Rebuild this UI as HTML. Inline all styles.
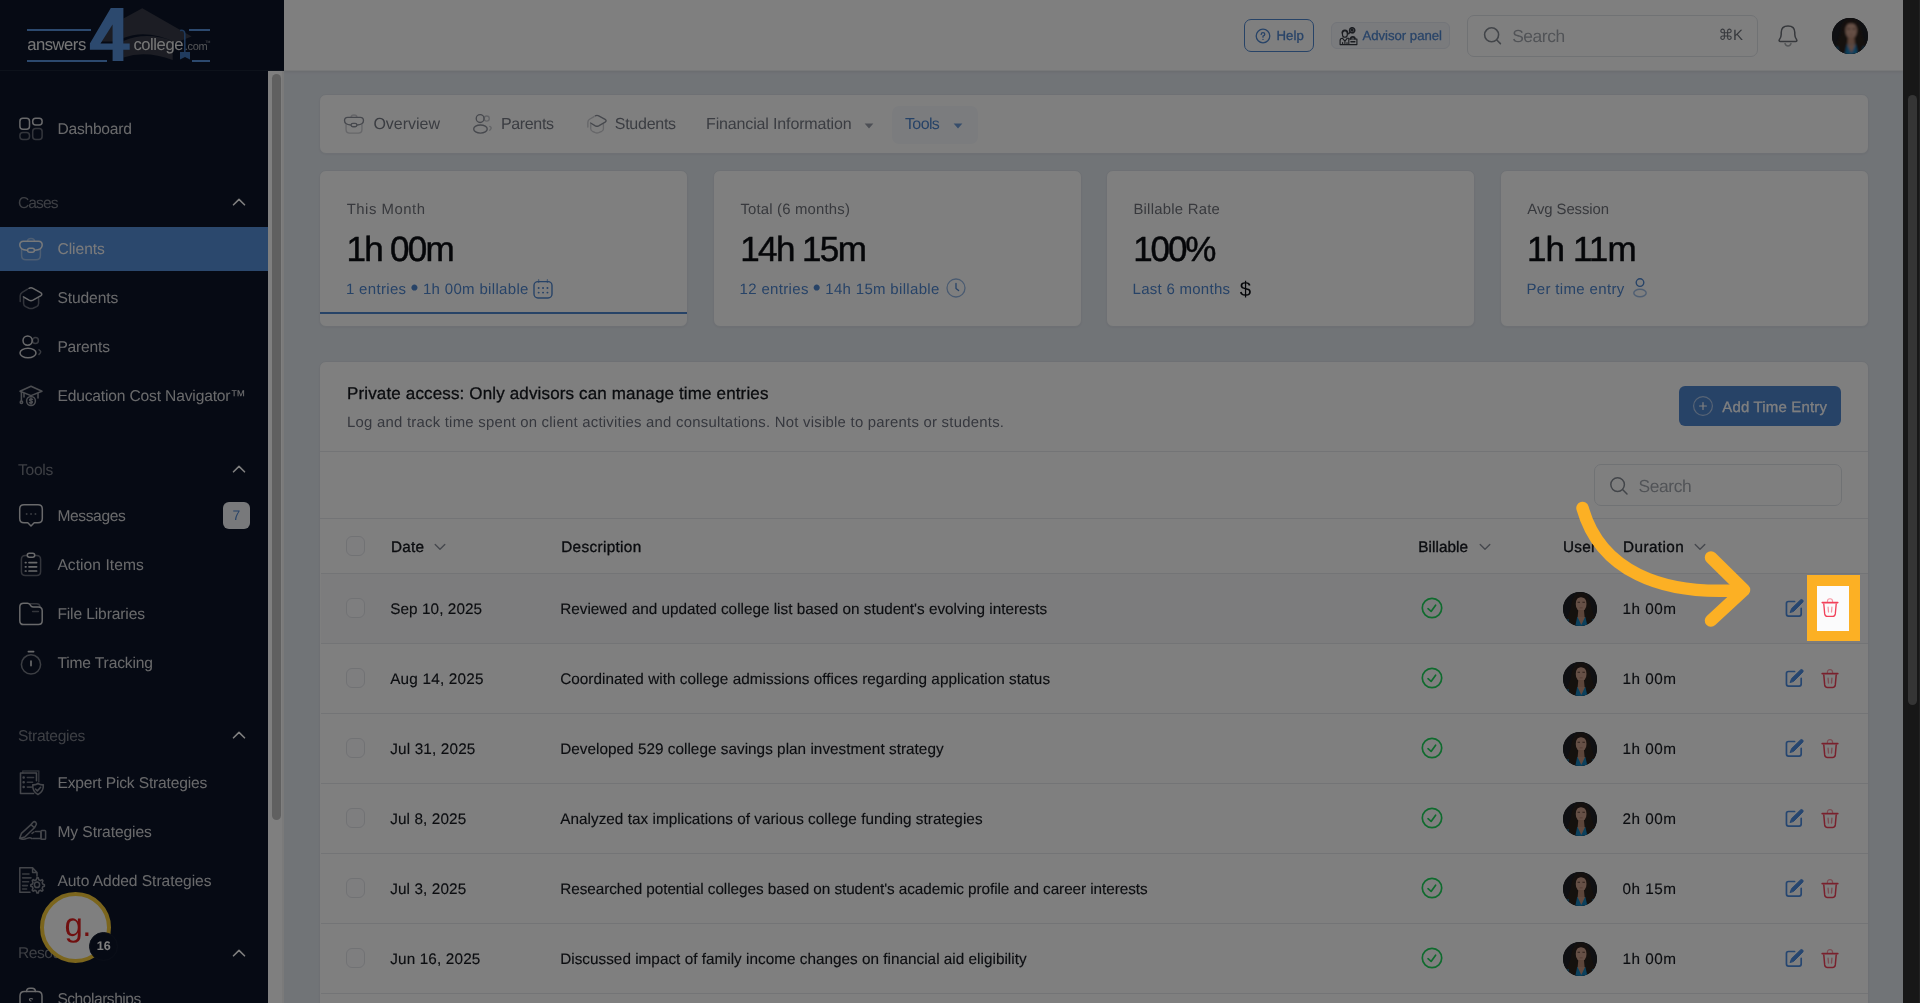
<!DOCTYPE html>
<html lang="en">
<head>
<meta charset="utf-8">
<title>Time Tracking</title>
<style>
*{box-sizing:border-box;margin:0;padding:0}
html,body{width:1920px;height:1003px;overflow:hidden;background:#e2e8f0}
body{font-family:"Liberation Sans",sans-serif;color:#111;position:relative;text-rendering:geometricPrecision}
.abs{position:absolute}
svg{display:block;overflow:visible}
#app{position:absolute;left:0;top:0;width:1920px;height:1003px;overflow:hidden;background:#e3e8ef;will-change:transform}
#logo{left:0;top:0;width:284px;height:71px;background:#0d1529;border-bottom:1px solid #1b2436}
#side{left:0;top:0;width:268px;height:1003px;background:#0d1529}
#sidescroll{left:268px;top:71px;width:16px;height:932px;background:#fefefe;border-right:2px solid #f4f4f4}
#sidescroll i{position:absolute;left:4px;top:3px;width:9px;height:746px;border-radius:5px;background:#c1c1c1}
.nav{position:absolute;left:0;width:268px;height:44px;color:#d2d3d6}
.nav svg{position:absolute;left:18px;top:9px}
.nav.on{background:#5690da;color:#f0f2f5}
.chev{position:absolute;left:232px}
#head{left:284px;top:0;width:1619px;height:71px;background:#fff;border-bottom:1px solid #eef0f3;box-shadow:0 1px 3px rgba(0,0,0,.08)}
.card{position:absolute;background:#fff;border:1px solid #dce1e8;border-radius:7px;box-shadow:0 1px 2px rgba(0,0,0,.04)}
.t{position:absolute;white-space:nowrap}
.row{position:absolute;left:0;width:1548px;height:70px;border-top:1px solid #e6e8ec}
.cb{position:absolute;left:24.7px;width:19.5px;height:19.5px;border:1px solid #e2e4e9;border-radius:6px;background:#fdfdfe}
.av{position:absolute;border-radius:50%;overflow:hidden;background:#16171b}
#dim{left:0;top:0;width:1903px;height:1003px;background:rgba(0,0,0,.5)}
#pscroll{left:1903px;top:0;width:17px;height:1003px;background:#171717;border-right:1px solid #222}
#pscroll i{position:absolute;left:5px;top:95px;width:9px;height:610px;border-radius:5px;background:#353535}
</style>
</head>
<body>
<svg width="0" height="0" style="position:absolute"><defs><filter id="avb" x="-10%" y="-10%" width="120%" height="120%"><feGaussianBlur stdDeviation=".8"/></filter></defs></svg>
<div id="app">
<div id="side" class="abs"><div class="nav" style="top:107px"><svg width="26" height="26" viewBox="0 0 26 26" stroke="currentColor" fill="none" stroke-linecap="round" stroke-linejoin="round" stroke-width="1.5"><rect x="1.9" y="2.2" width="9.6" height="11" rx="3"/><rect x="14.7" y="2.2" width="9.4" height="6.8" rx="3"/><g opacity=".45"><rect x="1.9" y="16.6" width="9.6" height="6.8" rx="3"/><rect x="14.7" y="12.4" width="9.4" height="11" rx="3"/></g></svg><div class="t" style="left:57.4px;top:12.6px;font-size:15.6px;line-height:20px;letter-spacing:-0.224px;color:#d2d3d6;">Dashboard</div></div><div class="t" style="left:18px;top:193.6px;font-size:15.6px;line-height:20px;letter-spacing:-0.944px;color:#7a7e88;">Cases</div><div class="chev" style="top:198px"><svg width="14" height="8" viewBox="0 0 14 8" stroke="#ffffff" fill="none" stroke-width="1.6" stroke-linecap="round" stroke-linejoin="round"><path d="M1.5 6.8 L7 1.4 L12.5 6.8"/></svg></div><div class="nav on" style="top:227px"><svg width="26" height="26" viewBox="0 0 26 26" stroke="currentColor" fill="none" stroke-linecap="round" stroke-linejoin="round" stroke-width="1.5"><path opacity=".45" d="M9.5 5.2 Q9.5 2.4 13 2.4 Q16.5 2.4 16.5 5.2"/><path d="M5.5 5.2 H20.5 Q24.2 5.2 24.2 9 Q24.2 13.8 17 14.2 M9 14.2 Q1.8 13.8 1.8 9 Q1.8 5.2 5.5 5.2"/><rect x="9.6" y="12.2" width="6.8" height="4" rx="2"/><path opacity=".45" d="M3.6 13.5 V19.5 Q3.6 23.8 8 23.8 H18 Q22.4 23.8 22.4 19.5 V13.5"/></svg><div class="t" style="left:57.4px;top:12.6px;font-size:15.6px;line-height:20px;letter-spacing:-0.026px;color:#f4f5f7;">Clients</div></div><div class="nav" style="top:276px"><svg width="26" height="26" viewBox="0 0 26 26" stroke="currentColor" fill="none" stroke-linecap="round" stroke-linejoin="round" stroke-width="1.5"><path d="M11 3.3 Q13 2.2 15 3.3 L22.6 7.6 Q25 9.2 22.6 10.8 L15 15.2 Q13 16.2 11 15.2 L5.4 11.8"/><path opacity=".45" d="M9.5 4.2 L4.2 7.4 Q2.2 8.8 2.2 11 V16.5"/><path opacity=".45" d="M5.6 13.5 V18.5 Q5.6 20.5 7.6 21.6 L11 23.2 Q13 24 15 23.2 L18.6 21.6 Q20.6 20.5 20.6 18.5 V13.5"/></svg><div class="t" style="left:57.4px;top:12.6px;font-size:15.6px;line-height:20px;letter-spacing:-0.097px;color:#d2d3d6;">Students</div></div><div class="nav" style="top:325px"><svg width="26" height="26" viewBox="0 0 26 26" stroke="currentColor" fill="none" stroke-linecap="round" stroke-linejoin="round" stroke-width="1.5"><circle cx="9.6" cy="6.6" r="4.6"/><ellipse cx="10" cy="19" rx="8" ry="4.8"/><g opacity=".5"><circle cx="17.4" cy="6.6" r="3"/><path d="M21 15.8 Q24.4 17.6 21 20.4"/></g></svg><div class="t" style="left:57.4px;top:12.6px;font-size:15.6px;line-height:20px;letter-spacing:-0.181px;color:#d2d3d6;">Parents</div></div><div class="nav" style="top:374px"><svg style="opacity:.7" width="26" height="26" viewBox="0 0 26 26" stroke="currentColor" fill="none" stroke-linecap="round" stroke-linejoin="round" stroke-width="1.5" stroke-width="1"><path d="M2 8.2 L13 3.2 L24 8.2 L13 12.6 Z"/><path d="M6 10.4 V14 M20 10.4 V15 M3.4 9 V17.6"/><circle cx="3.4" cy="19.2" r="1.2"/><circle cx="13" cy="18" r="4.4"/><path d="M14.5 16.4 Q13 15.4 11.8 16.4 Q11.2 17.6 13 18 Q14.8 18.5 14.2 19.6 Q13 20.6 11.5 19.6 M13 15 V21"/></svg><div class="t" style="left:57.4px;top:12.6px;font-size:15.6px;line-height:20px;letter-spacing:-0.160px;color:#d2d3d6;">Education Cost Navigator™</div></div><div class="t" style="left:18px;top:460.6px;font-size:15.6px;line-height:20px;letter-spacing:-0.284px;color:#7a7e88;">Tools</div><div class="chev" style="top:465px"><svg width="14" height="8" viewBox="0 0 14 8" stroke="#ffffff" fill="none" stroke-width="1.6" stroke-linecap="round" stroke-linejoin="round"><path d="M1.5 6.8 L7 1.4 L12.5 6.8"/></svg></div><div class="nav" style="top:494px"><svg width="26" height="26" viewBox="0 0 26 26" stroke="currentColor" fill="none" stroke-linecap="round" stroke-linejoin="round" stroke-width="1.5"><path d="M6 1.8 H20 Q24.3 1.8 24.3 6 V15.5 Q24.3 19.8 20 19.8 H16.2 L13 23 L9.8 19.8 H6 Q1.7 19.8 1.7 15.5 V6 Q1.7 1.8 6 1.8 Z"/><g opacity=".5" stroke-width="1.8"><path d="M8.6 11 h.1 M13 11 h.1 M17.4 11 h.1"/></g></svg><div class="t" style="left:57.4px;top:12.6px;font-size:15.6px;line-height:20px;letter-spacing:-0.388px;color:#d2d3d6;">Messages</div><b style="position:absolute;left:223px;top:8px;width:27px;height:27px;border-radius:6px;background:#f1f3f6;color:#4f86cf;font-weight:normal;font-size:14px;line-height:27px;text-align:center">7</b></div><div class="nav" style="top:543px"><svg width="26" height="26" viewBox="0 0 26 26" stroke="currentColor" fill="none" stroke-linecap="round" stroke-linejoin="round" stroke-width="1.5"><rect x="9.3" y="1.3" width="7.4" height="3.9" rx="1.9"/><path opacity=".45" d="M9 3.4 H7.4 Q3.4 3.4 3.4 7.4 V19.6 Q3.4 23.6 7.4 23.6 H18.6 Q22.6 23.6 22.6 19.6 V7.4 Q22.6 3.4 18.6 3.4 H17"/><g stroke-width="1.7"><path d="M7.4 10.6 h.6 M11 10.6 H18.6 M7.4 14.8 h.6 M11 14.8 H18.6 M7.4 19 h.6 M11 19 H18.6"/></g></svg><div class="t" style="left:57.4px;top:12.6px;font-size:15.6px;line-height:20px;letter-spacing:0.056px;color:#d2d3d6;">Action Items</div></div><div class="nav" style="top:592px"><svg width="26" height="26" viewBox="0 0 26 26" stroke="currentColor" fill="none" stroke-linecap="round" stroke-linejoin="round" stroke-width="1.5"><path d="M1.8 6 Q1.8 2.2 5.6 2.2 H9.4 Q11 2.2 12 3.6 L13 5 Q13.8 6 15.4 6 H20.4 Q24.2 6 24.2 9.8 V19.8 Q24.2 23.6 20.4 23.6 H5.6 Q1.8 23.6 1.8 19.8 Z"/><g opacity=".45"><path d="M12 2.8 H18.6 Q21.6 2.8 22 5.6 M14.6 10.6 H20.4"/></g></svg><div class="t" style="left:57.4px;top:12.6px;font-size:15.6px;line-height:20px;letter-spacing:-0.129px;color:#d2d3d6;">File Libraries</div></div><div class="nav" style="top:641px"><svg width="26" height="26" viewBox="0 0 26 26" stroke="currentColor" fill="none" stroke-linecap="round" stroke-linejoin="round" stroke-width="1.5"><circle cx="13" cy="14.4" r="9.6" opacity=".55"/><path d="M10.4 1.6 H15.6 M13 11 V15.6" stroke-width="1.7"/></svg><div class="t" style="left:57.4px;top:12.6px;font-size:15.6px;line-height:20px;letter-spacing:-0.145px;color:#d2d3d6;">Time Tracking</div></div><div class="t" style="left:18px;top:726.8px;font-size:15.6px;line-height:20px;letter-spacing:-0.324px;color:#7a7e88;">Strategies</div><div class="chev" style="top:731.2px"><svg width="14" height="8" viewBox="0 0 14 8" stroke="#ffffff" fill="none" stroke-width="1.6" stroke-linecap="round" stroke-linejoin="round"><path d="M1.5 6.8 L7 1.4 L12.5 6.8"/></svg></div><div class="nav" style="top:761px"><svg style="top:8px;opacity:.62" width="27" height="27.5" viewBox="0 0 26 26" stroke="currentColor" fill="none" stroke-linecap="round" stroke-linejoin="round" stroke-width="1.5" stroke-width="1"><path d="M15 23.4 H2.4 V3.6 H17.8 V11"/><path d="M4.6 3.6 V1.6 H20 V12" opacity=".6"/><path d="M5.4 8 h.1 M5.4 12.6 h.1 M5.4 17.2 h.1" stroke-width="2.4"/><path d="M9 8 H15 M9 12.6 H14 M9 17.2 H13" opacity=".8"/><path d="M19.2 13.6 Q21.6 15.4 24.4 15 Q24.8 21.4 19.2 24.4 Q13.8 21.4 14.2 15 Q17 15.4 19.2 13.6 Z"/><path d="M16.8 19 L18.6 20.8 L21.8 17.4"/></svg><div class="t" style="left:57.4px;top:12.6px;font-size:15.6px;line-height:20px;letter-spacing:-0.162px;color:#d2d3d6;">Expert Pick Strategies</div></div><div class="nav" style="top:810px"><svg style="opacity:.62" width="30" height="26" viewBox="0 0 30 26" stroke="currentColor" fill="none" stroke-linecap="round" stroke-linejoin="round" stroke-width="1.5" stroke-width="1"><path d="M1.6 19.4 L3.4 14.4 L13 5.6 L16.4 8.8 L6.8 18 Z M13 5.6 L15 3.2 Q16.4 2 17.8 3.4 Q19 4.8 17.8 6.4 L16.4 8.8 M1.6 19.4 Q5 21 9 19.4 Q12 18.2 14 19.6"/><path d="M17.6 12.4 H22 Q23 12.4 23 13.4 V19 M14 14.4 L16 13 M15 19.4 H23"/><rect x="23" y="11.4" width="4.6" height="8.8" rx=".8"/></svg><div class="t" style="left:57.4px;top:12.6px;font-size:15.6px;line-height:20px;letter-spacing:-0.067px;color:#d2d3d6;">My Strategies</div></div><div class="nav" style="top:859px"><svg style="top:7px;opacity:.62" width="28" height="28" viewBox="0 0 28 26" preserveAspectRatio="none" stroke="currentColor" fill="none" stroke-linecap="round" stroke-linejoin="round" stroke-width="1.5" stroke-width="1"><path d="M12 24.4 H1.8 V1.6 H14.6 L19 6 V9.4 M14.6 1.6 V6 H19"/><path d="M4.6 7.4 H11 M4.6 11 H13 M4.6 14.6 H10.6 M4.6 18.2 H9.4 M4.6 21.4 H8.6" opacity=".8"/><circle cx="19" cy="17.4" r="2.6"/><path d="M19 10.8 L20.3 11 L20.8 12.8 L22.4 13.6 L24 12.7 L25 13.7 L24.2 15.3 L24.8 16.8 L26.4 17.4 L26.4 18.8 L24.8 19.3 L24.2 20.8 L25 22.4 L24 23.4 L22.4 22.6 L20.8 23.2 L20.3 25 L18.9 25 L18.3 23.2 L16.8 22.6 L15.2 23.4 L14.2 22.4 L15 20.8 L14.4 19.3 L12.8 18.8 L12.8 17.4 L14.4 16.8 L15 15.3 L14.2 13.7 L15.2 12.7 L16.8 13.6 L18.3 12.8 Z"/></svg><div class="t" style="left:57.4px;top:12.6px;font-size:15.6px;line-height:20px;letter-spacing:-0.055px;color:#d2d3d6;">Auto Added Strategies</div></div><div class="t" style="left:18px;top:944.2px;font-size:15.6px;line-height:20px;letter-spacing:-0.507px;color:#7a7e88;">Resources</div><div class="chev" style="top:948.6px"><svg width="14" height="8" viewBox="0 0 14 8" stroke="#ffffff" fill="none" stroke-width="1.6" stroke-linecap="round" stroke-linejoin="round"><path d="M1.5 6.8 L7 1.4 L12.5 6.8"/></svg></div><div class="nav" style="top:977px"><svg width="26" height="26" viewBox="0 0 26 26" stroke="currentColor" fill="none" stroke-linecap="round" stroke-linejoin="round" stroke-width="1.5"><path d="M8.6 5.6 Q8.6 2.2 12 2.2 H14 Q17.4 2.2 17.4 5.6"/><path d="M2 10 Q2 5.6 6.4 5.6 H19.6 Q24 5.6 24 10 V24 H2 Z"/><path d="M14.6 13 Q13 12 11.6 13 Q11 14.4 13 15" stroke-width="1.1"/></svg><div class="t" style="left:57.4px;top:12.6px;font-size:15.6px;line-height:20px;letter-spacing:-0.485px;color:#d2d3d6;">Scholarships</div></div>
<div class="abs" style="left:40px;top:892px;width:71px;height:71px;border-radius:50%;background:#ffffff;border:4.5px solid #f6cb3a"></div>
<div class="abs" style="left:64.6px;top:905.2px;font-size:33px;line-height:40px;color:#e01f1f;letter-spacing:-.6px;white-space:nowrap">g.</div>
<div class="abs" style="left:89.3px;top:931.8px;width:29px;height:29px;border-radius:50%;background:#0d1529;border:1px solid #151d30;color:#fff;font-weight:bold;font-size:12.5px;line-height:27px;text-align:center">16</div>
</div>
<div id="logo" class="abs">
<svg width="284" height="70" viewBox="0 0 284 70">
 <path d="M123.4 18.5 L142.3 8.2 L191.6 36.4 L176 42.5 Q146 28.5 123.4 38 Z" fill="#383b48"/>
 <path d="M123.4 41 Q146 31 172.7 41 L172.7 60 Q146 50 123.4 57.5 Z" fill="#383b48"/>
 <path d="M113 23.5 L113 41.5 L101 41.5 Z" fill="#383b48"/>
 <path fill-rule="evenodd" fill="#5892dc" d="M110.8 8 H123.4 V43.5 H129.7 V49.8 H123.4 V61 H112.6 V49.8 H89.9 V43.5 Z M112.6 24.5 L100.5 43.5 H112.6 Z"/>
 <path d="M180 30.5 Q184.8 29.5 184.8 34 V52" stroke="#3e72b6" stroke-width="1.6" fill="none"/>
 <path d="M180 52 H190 V59.6 L185 57 L180 59.6 Z" fill="#4077bd"/>
 <rect x="27" y="29" width="64" height="2" fill="#5892dc"/>
 <rect x="27" y="60" width="80" height="2" fill="#5892dc"/>
 <rect x="189" y="29" width="21" height="2" fill="#5892dc"/>
 <rect x="192" y="60" width="18" height="2" fill="#5892dc"/>
 <text x="27.3" y="49.6" font-size="16.6" fill="#ededed" letter-spacing="-0.48" font-family="Liberation Sans, sans-serif">answers</text>
 <text x="133.4" y="49.6" font-size="16.6" fill="#ededed" letter-spacing="-0.42" font-family="Liberation Sans, sans-serif">college</text>
 <text x="184.8" y="49.6" font-size="11" fill="#a9abb0" letter-spacing="-0.3" font-family="Liberation Sans, sans-serif">.com</text>
 <text x="205.5" y="42.5" font-size="3.4" fill="#a9abb0" font-family="Liberation Sans, sans-serif">TM</text>
</svg></div>
<div id="sidescroll" class="abs"><i></i></div>
<div id="head" class="abs">
 <div class="abs" style="left:960px;top:19px;width:70px;height:33px;border:1.3px solid #4f86cf;border-radius:7px"></div>
 <svg class="abs" style="left:971px;top:28px" width="16" height="16" viewBox="0 0 16 16" fill="none" stroke-linecap="round" stroke-linejoin="round" stroke="#4f86cf" stroke-width="1.3"><circle cx="8" cy="8" r="6.8"/><path d="M6.2 6.4 Q6.2 4.6 8 4.6 Q9.8 4.6 9.8 6.2 Q9.8 7.4 8 8.2 V9.2 M8 11.3 v.1"/></svg>
 <div class="t" style="left:992.5px;top:26px;font-size:13.2px;line-height:20px;letter-spacing:0.038px;color:#4f86cf;-webkit-text-stroke:0.3px #4f86cf;">Help</div>
 <div class="abs" style="left:1047px;top:22px;width:119px;height:27px;border:1px solid #e6eaf2;background:#f4f6fb;border-radius:6px"></div>
 <svg class="abs" style="left:1055px;top:26px" width="19" height="20" viewBox="0 0 19 20" fill="none" stroke-linecap="round" stroke-linejoin="round" stroke="#1d2129" stroke-width="1.15" opacity=".88"><ellipse cx="5.9" cy="8" rx="2.5" ry="3.3"/><path d="M3.2 7 Q3 4.2 5.9 4.2 Q8.8 4.2 8.6 7" stroke-width="1.5"/><path d="M1.1 18.6 V14.4 Q1.1 12.4 3.4 12.2 L5.9 15.2 L8.4 12.2 H9.8 M1.1 18.6 H17.9 V13 H9.8 V18.6 M3.6 18.4 V16.6 M8 18.4 V16.6 M5.9 15.2 V17.6" /><path d="M11.6 13 Q11.6 10.9 13.8 10.9 Q16 10.9 16 13" stroke-width="1.6"/><path d="M12 15.8 H15.8" stroke-width="1.5"/><circle cx="13.2" cy="4.3" r="2.5" stroke-width="1.7" stroke-dasharray="1.3 .9"/><circle cx="13.2" cy="4.3" r=".9" fill="#1d2129"/><path d="M10.8 6.6 L9.6 7.8" stroke-width="1.4"/></svg>
 <div class="t" style="left:1078.4px;top:26px;font-size:13.2px;line-height:20px;letter-spacing:-0.022px;color:#4f86cf;-webkit-text-stroke:0.25px #4f86cf;">Advisor panel</div>
 <div class="abs" style="left:1183px;top:15px;width:291px;height:41.5px;border:1px solid #e1e4e9;border-radius:7px;background:#fff"></div>
 <svg class="abs" style="left:1199px;top:26px" width="21" height="21" viewBox="0 0 21 21" fill="none" stroke-linecap="round" stroke-linejoin="round" stroke="#858a93" stroke-width="1.6"><circle cx="8.6" cy="8.8" r="7"/><path d="M13.8 14 L17.4 17.6"/></svg>
 <div class="t" style="left:1228.2px;top:26.1px;font-size:17.4px;line-height:20px;letter-spacing:-0.439px;color:#a3a7ae;">Search</div>
 <div class="t" style="left:1434.5px;top:26px;font-size:15px;line-height:20px;color:#70747c;letter-spacing:-.6px;">&#8984;K</div>
 <svg class="abs" style="left:1492.5px;top:24px" width="22" height="24" viewBox="0 0 22 24" fill="none" stroke-linecap="round" stroke-linejoin="round" stroke="#6d7178" stroke-width="1.5"><path d="M3.4 17.4 Q1.4 17.4 2.4 15.6 Q4.2 13 4.2 10.4 V8.6 Q4.2 2 11 2 Q17.8 2 17.8 8.6 V10.4 Q17.8 13 19.6 15.6 Q20.6 17.4 18.6 17.4 Z"/><path d="M8 19.6 Q8.8 22 11 22 Q13.2 22 14 19.6" opacity=".6"/></svg>
 <div class="av" style="left:1548px;top:18px;width:36px;height:36px"><svg width="36" height="36" viewBox="0 0 36 36"><rect width="36" height="36" fill="#1e2026"/><g filter="url(#avb)">
<path d="M19 0.8 Q10.5 1.2 9.4 11 Q8.6 18 5.6 24 Q2.6 30 4.4 38 H33.6 Q35.4 30 32.6 24 Q29.8 18 28.8 11 Q27.6 1.2 19 0.8 Z" fill="#2c201b"/>
<path d="M1.5 30.5 L6 28.4 L7 37 H2 Z M34.5 30 L31 28.2 L30 37 H34 Z" fill="#0f6894"/>
<ellipse cx="19.2" cy="12.6" rx="5.7" ry="8" fill="#cda08c"/>
<path d="M16.2 19 H22.2 L23 27.5 H15.4 Z" fill="#b98a74"/>
<path d="M12.8 37 L15 26.4 H23.8 L26 37 Z" fill="#1482bc"/>
<path d="M15.4 26.4 H23.4 L19.4 35 Z" fill="#c2927c"/>
<path d="M15.4 10.8 h2.6 M20.6 10.8 h2.6" stroke="#5e4238" stroke-width="1.2" fill="none"/>
<path d="M17.6 16.8 h3.2" stroke="#a8766a" stroke-width=".9" fill="none"/>
<path d="M13.2 8.4 Q14.6 3.6 19 3.4 Q23.8 3.6 25.2 8.6 Q22 5.4 19 5.6 Q16 5.4 13.2 8.4 Z" fill="#2c201b"/>
</g></svg></div>
</div>
<div class="card" style="left:319px;top:94px;width:1550px;height:60px"><div class="abs" style="left:1px;top:1px;width:1548px;height:58px">
 <svg class="abs" style="left:22px;top:17px" width="22" height="22" viewBox="0 0 26 26" fill="none" stroke-linecap="round" stroke-linejoin="round" stroke="#8d919b" stroke-width="1.6"><path opacity=".45" d="M9.5 5.2 Q9.5 2.4 13 2.4 Q16.5 2.4 16.5 5.2"/><path d="M5.5 5.2 H20.5 Q24.2 5.2 24.2 9 Q24.2 13.8 17 14.2 M9 14.2 Q1.8 13.8 1.8 9 Q1.8 5.2 5.5 5.2"/><rect x="9.6" y="12.2" width="6.8" height="4" rx="2"/><path opacity=".45" d="M3.6 13.5 V19.5 Q3.6 23.8 8 23.8 H18 Q22.4 23.8 22.4 19.5 V13.5"/></svg><div class="t" style="left:52.4px;top:19px;font-size:16px;line-height:20px;letter-spacing:-0.010px;color:#767a84;">Overview</div>
 <svg class="abs" style="left:151px;top:17px" width="22" height="22" viewBox="0 0 26 26" fill="none" stroke-linecap="round" stroke-linejoin="round" stroke="#8d919b" stroke-width="1.6"><circle cx="9.6" cy="6.6" r="4.6"/><ellipse cx="10" cy="19" rx="8" ry="4.8"/><g opacity=".5"><circle cx="17.4" cy="6.6" r="3"/><path d="M21 15.8 Q24.4 17.6 21 20.4"/></g></svg><div class="t" style="left:180px;top:19px;font-size:16px;line-height:20px;letter-spacing:-0.363px;color:#767a84;">Parents</div>
 <svg class="abs" style="left:265px;top:17px" width="22" height="22" viewBox="0 0 26 26" fill="none" stroke-linecap="round" stroke-linejoin="round" stroke="#8d919b" stroke-width="1.6"><path d="M11 3.3 Q13 2.2 15 3.3 L22.6 7.6 Q25 9.2 22.6 10.8 L15 15.2 Q13 16.2 11 15.2 L5.4 11.8"/><path opacity=".45" d="M9.5 4.2 L4.2 7.4 Q2.2 8.8 2.2 11 V16.5"/><path opacity=".45" d="M5.6 13.5 V18.5 Q5.6 20.5 7.6 21.6 L11 23.2 Q13 24 15 23.2 L18.6 21.6 Q20.6 20.5 20.6 18.5 V13.5"/></svg><div class="t" style="left:293.8px;top:19px;font-size:16px;line-height:20px;letter-spacing:-0.270px;color:#767a84;">Students</div>
 <div class="t" style="left:385px;top:19px;font-size:16px;line-height:20px;letter-spacing:-0.144px;color:#767a84;">Financial Information</div><svg class="abs" style="left:543px;top:27px" width="10" height="6" viewBox="0 0 10 6"><path d="M.6 .6 H9.4 L5 5.4 Z" fill="#9a9fab"/></svg>
 <div class="abs" style="left:571px;top:9.5px;width:86px;height:38.5px;border-radius:7px;background:#f7f9fc"></div>
 <div class="t" style="left:584px;top:19px;font-size:16px;line-height:20px;letter-spacing:-0.630px;color:#4f86cf;">Tools</div><svg class="abs" style="left:632px;top:27px" width="10" height="6" viewBox="0 0 10 6"><path d="M.6 .6 H9.4 L5 5.4 Z" fill="#6f9bd6"/></svg>
</div></div>
<div class="card" style="left:319px;top:170px;width:369px;height:157px;overflow:hidden"><div class="abs" style="left:1px;top:0;width:366px;height:155px">
 <div class="t" style="left:25.7px;top:29.2px;font-size:14.9px;line-height:20px;letter-spacing:0.510px;color:#70737b;">This Month</div>
 <div class="t" style="left:25.5px;top:59px;font-size:35px;line-height:40px;letter-spacing:-1.724px;color:#0b0d12;-webkit-text-stroke:0.5px #0b0d12;">1h 00m</div>
 <div class="t" style="left:24.9px;top:108.5px;font-size:15px;line-height:20px;letter-spacing:0.331px;color:#4f86cf;">1 entries <span style="display:inline-block;width:.5em;white-space:nowrap;letter-spacing:0"><span style="font-size:1.5em;line-height:0;position:relative;left:-.02em;top:.07em">•</span></span> 1h 00m billable</div>
 <svg class="abs" style="left:212px;top:107.5px" width="20" height="20" viewBox="0 0 20 20" fill="none" stroke-linecap="round" stroke-linejoin="round" stroke="#4f86cf" stroke-width="1.4"><rect x="1" y="2.6" width="18" height="16.4" rx="4"/><path d="M5.6 .8 V3.4 M14.4 .8 V3.4" opacity=".6"/><path d="M5.6 9 h.1 M10 9 h.1 M14.4 9 h.1 M5.6 13.6 h.1 M10 13.6 h.1 M14.4 13.6 h.1" stroke-width="1.9"/></svg><div class="abs" style="left:-2px;top:140.5px;width:372px;height:2px;background:#4f86cf"></div>
</div></div><div class="card" style="left:713px;top:170px;width:369px;height:157px;overflow:hidden"><div class="abs" style="left:0.7px;top:0;width:366px;height:155px">
 <div class="t" style="left:25.7px;top:29.2px;font-size:14.9px;line-height:20px;letter-spacing:0.186px;color:#70737b;">Total (6 months)</div>
 <div class="t" style="left:25.5px;top:59px;font-size:35px;line-height:40px;letter-spacing:-1.601px;color:#0b0d12;-webkit-text-stroke:0.5px #0b0d12;">14h 15m</div>
 <div class="t" style="left:24.9px;top:108.5px;font-size:15px;line-height:20px;letter-spacing:0.326px;color:#4f86cf;">12 entries <span style="display:inline-block;width:.5em;white-space:nowrap;letter-spacing:0"><span style="font-size:1.5em;line-height:0;position:relative;left:-.02em;top:.07em">•</span></span> 14h 15m billable</div>
 <svg class="abs" style="left:231px;top:107px" width="20" height="20" viewBox="0 0 20 20" fill="none" stroke-linecap="round" stroke-linejoin="round" stroke="#4f86cf" stroke-width="1.3"><circle cx="10" cy="10" r="9" opacity=".6"/><path d="M10 5.4 V10.4 L12.6 12.6"/></svg>
</div></div><div class="card" style="left:1105.5px;top:170px;width:369px;height:157px;overflow:hidden"><div class="abs" style="left:1.2px;top:0;width:366px;height:155px">
 <div class="t" style="left:25.7px;top:29.2px;font-size:14.9px;line-height:20px;letter-spacing:0.242px;color:#70737b;">Billable Rate</div>
 <div class="t" style="left:25.5px;top:59px;font-size:35px;line-height:40px;letter-spacing:-2.079px;color:#0b0d12;-webkit-text-stroke:0.5px #0b0d12;">100%</div>
 <div class="t" style="left:24.9px;top:108.5px;font-size:15px;line-height:20px;letter-spacing:0.268px;color:#4f86cf;">Last 6 months</div>
 <div class="t" style="left:132px;top:107.5px;font-size:20.5px;line-height:22px;color:#0b0d12;">$</div>
</div></div><div class="card" style="left:1500px;top:170px;width:369px;height:157px;overflow:hidden"><div class="abs" style="left:0.6px;top:0;width:366px;height:155px">
 <div class="t" style="left:25.7px;top:29.2px;font-size:14.9px;line-height:20px;letter-spacing:-0.069px;color:#70737b;">Avg Session</div>
 <div class="t" style="left:25.5px;top:59px;font-size:35px;line-height:40px;letter-spacing:-0.941px;color:#0b0d12;-webkit-text-stroke:0.5px #0b0d12;">1h 11m</div>
 <div class="t" style="left:24.9px;top:108.5px;font-size:15px;line-height:20px;letter-spacing:0.338px;color:#4f86cf;">Per time entry</div>
 <svg class="abs" style="left:130px;top:106px" width="16" height="22" viewBox="0 0 16 22" fill="none" stroke-linecap="round" stroke-linejoin="round" stroke="#4f86cf" stroke-width="1.4"><circle cx="8" cy="5.6" r="3.8"/><ellipse cx="8" cy="16" rx="6.2" ry="3.8" opacity=".55"/></svg>
</div></div>
<div class="card" style="left:319px;top:361px;width:1550px;height:700px;overflow:hidden"><div class="abs" style="left:1px;top:0;width:1548px;height:700px">
 <div class="t" style="left:26px;top:21.6px;font-size:17px;line-height:20px;letter-spacing:0.146px;color:#14171d;-webkit-text-stroke:0.3px #14171d;">Private access: Only advisors can manage time entries</div>
 <div class="t" style="left:26px;top:51.2px;font-size:14.9px;line-height:20px;letter-spacing:0.240px;color:#6c707d;">Log and track time spent on client activities and consultations. Not visible to parents or students.</div>
 <div class="abs" style="left:1358px;top:24px;width:162px;height:40px;border-radius:6px;background:#4f86cf"></div>
 <svg class="abs" style="left:1372.3px;top:34.2px" width="20" height="20" viewBox="0 0 20 20" fill="none" stroke-linecap="round" stroke-linejoin="round" stroke="#ffffff" stroke-width="1.2"><circle cx="10" cy="10" r="9.4" opacity=".55"/><path d="M10 6.6 V13.4 M6.6 10 H13.4"/></svg>
 <div class="t" style="left:1401.3px;top:36.2px;font-size:15px;line-height:20px;letter-spacing:0.168px;color:#ffffff;-webkit-text-stroke:0.25px #ffffff;">Add Time Entry</div>
 <div class="abs" style="left:-1px;top:88.5px;width:1550px;height:1px;background:#e6e8ec"></div>
 <div class="abs" style="left:1272.5px;top:102px;width:248px;height:41.5px;border:1px solid #e1e4e9;border-radius:7px;background:#fff"></div>
 <svg class="abs" style="left:1288px;top:113.5px" width="20" height="20" viewBox="0 0 20 20" fill="none" stroke-linecap="round" stroke-linejoin="round" stroke="#858a93" stroke-width="1.5"><circle cx="8.6" cy="8.6" r="6.8"/><path d="M13.8 13.8 L18 18"/></svg>
 <div class="t" style="left:1317.6px;top:113.8px;font-size:17.4px;line-height:20px;letter-spacing:-0.389px;color:#a3a7ae;">Search</div>
 <div class="abs" style="left:-1px;top:155.5px;width:1550px;height:1px;background:#e6e8ec"></div>
 <i class="cb" style="top:174px"></i>
 <div class="t" style="left:69.9px;top:176px;font-size:15.3px;line-height:20px;letter-spacing:0.270px;color:#14171d;-webkit-text-stroke:0.35px #14171d;">Date</div><svg class="abs" style="left:113px;top:181px" width="12" height="8" viewBox="0 0 12 8" fill="none" stroke-linecap="round" stroke-linejoin="round" stroke="#8b909b" stroke-width="1.4"><path d="M1.2 1.4 L6 6.2 L10.8 1.4"/></svg>
 <div class="t" style="left:240.2px;top:176px;font-size:15.3px;line-height:20px;letter-spacing:0.352px;color:#14171d;-webkit-text-stroke:0.35px #14171d;">Description</div>
 <div class="t" style="left:1097.2px;top:176px;font-size:15.3px;line-height:20px;letter-spacing:0.084px;color:#14171d;-webkit-text-stroke:0.35px #14171d;">Billable</div><svg class="abs" style="left:1157.5px;top:181px" width="12" height="8" viewBox="0 0 12 8" fill="none" stroke-linecap="round" stroke-linejoin="round" stroke="#8b909b" stroke-width="1.4"><path d="M1.2 1.4 L6 6.2 L10.8 1.4"/></svg>
 <div class="t" style="left:1242px;top:176px;font-size:15.3px;line-height:20px;letter-spacing:0.299px;color:#14171d;-webkit-text-stroke:0.35px #14171d;">User</div>
 <div class="t" style="left:1302.1px;top:176px;font-size:15.3px;line-height:20px;letter-spacing:0.396px;color:#14171d;-webkit-text-stroke:0.35px #14171d;">Duration</div><svg class="abs" style="left:1373px;top:181px" width="12" height="8" viewBox="0 0 12 8" fill="none" stroke-linecap="round" stroke-linejoin="round" stroke="#8b909b" stroke-width="1.4"><path d="M1.2 1.4 L6 6.2 L10.8 1.4"/></svg>
 <div class="row" style="top:211px;background:#f9f9fa"><i class="cb" style="top:24px"></i>
 <div class="t" style="left:69.2px;top:25.5px;font-size:15.3px;line-height:20px;letter-spacing:0.081px;color:#171a20;-webkit-text-stroke:0.15px #171a20;">Sep 10, 2025</div><div class="t" style="left:239.2px;top:25.5px;font-size:15.3px;line-height:20px;letter-spacing:0.002px;color:#171a20;-webkit-text-stroke:0.15px #171a20;">Reviewed and updated college list based on student's evolving interests</div>
 <svg class="abs" style="left:1099px;top:22.3px" width="24" height="24" viewBox="0 0 24 24" fill="none" stroke-linecap="round" stroke-linejoin="round" stroke="#1fd65c" stroke-width="1.7"><circle cx="12" cy="12" r="9.7"/><path d="M8 12.7 L11.1 15.4 L15.6 9.2"/></svg><div class="av" style="left:1242px;top:17.5px;width:34px;height:34px"><svg width="34" height="34" viewBox="0 0 36 36"><rect width="36" height="36" fill="#1e2026"/><g filter="url(#avb)">
<path d="M19 0.8 Q10.5 1.2 9.4 11 Q8.6 18 5.6 24 Q2.6 30 4.4 38 H33.6 Q35.4 30 32.6 24 Q29.8 18 28.8 11 Q27.6 1.2 19 0.8 Z" fill="#2c201b"/>
<path d="M1.5 30.5 L6 28.4 L7 37 H2 Z M34.5 30 L31 28.2 L30 37 H34 Z" fill="#0f6894"/>
<ellipse cx="19.2" cy="12.6" rx="5.7" ry="8" fill="#cda08c"/>
<path d="M16.2 19 H22.2 L23 27.5 H15.4 Z" fill="#b98a74"/>
<path d="M12.8 37 L15 26.4 H23.8 L26 37 Z" fill="#1482bc"/>
<path d="M15.4 26.4 H23.4 L19.4 35 Z" fill="#c2927c"/>
<path d="M15.4 10.8 h2.6 M20.6 10.8 h2.6" stroke="#5e4238" stroke-width="1.2" fill="none"/>
<path d="M17.6 16.8 h3.2" stroke="#a8766a" stroke-width=".9" fill="none"/>
<path d="M13.2 8.4 Q14.6 3.6 19 3.4 Q23.8 3.6 25.2 8.6 Q22 5.4 19 5.6 Q16 5.4 13.2 8.4 Z" fill="#2c201b"/>
</g></svg></div><div class="t" style="left:1301.6px;top:25.5px;font-size:15.3px;line-height:20px;letter-spacing:0.461px;color:#171a20;-webkit-text-stroke:0.15px #171a20;">1h 00m</div><svg class="abs" style="left:1463px;top:23px" width="22" height="22" viewBox="0 0 22 22" fill="none" stroke-linecap="round" stroke-linejoin="round" stroke="#4c8ce0" stroke-width="1.7"><path d="M10.6 4.5 H4.45 Q2.45 4.5 2.45 6.5 V17.1 Q2.45 19.1 4.45 19.1 H15.2 Q17.2 19.1 17.2 17.1 V11.4"/><path d="M6.2 15.2 L7.6 11.6 L16.5 2.9 Q17.6 2 18.7 3 Q19.7 4.1 18.7 5.2 L9.8 14.2 Z" fill="#4c8ce0" stroke-width="1"/></svg><svg class="abs" style="left:1499px;top:23.5px" width="20" height="22" viewBox="0 0 20 22" fill="none" stroke-linecap="round" stroke-linejoin="round" stroke="#f2415a" stroke-width="1.5"><path d="M7.4 4.6 Q7.4 1.7 10 1.7 Q12.6 1.7 12.6 4.6" opacity=".55" stroke-width="1.3"/><path d="M2.2 5.6 H17.8" stroke-width="1.7"/><path d="M3.8 7 L4.7 16.9 Q5 19.4 7.4 19.4 H12.6 Q15 19.4 15.3 16.9 L16.2 7"/><path d="M8.1 10.2 L8.5 15 M11.9 10.2 L11.5 15" opacity=".55" stroke-width="1.4"/></svg></div><div class="row" style="top:281px"><i class="cb" style="top:24px"></i>
 <div class="t" style="left:69.2px;top:25.5px;font-size:15.3px;line-height:20px;letter-spacing:0.206px;color:#171a20;-webkit-text-stroke:0.15px #171a20;">Aug 14, 2025</div><div class="t" style="left:239.2px;top:25.5px;font-size:15.3px;line-height:20px;letter-spacing:0.029px;color:#171a20;-webkit-text-stroke:0.15px #171a20;">Coordinated with college admissions offices regarding application status</div>
 <svg class="abs" style="left:1099px;top:22.3px" width="24" height="24" viewBox="0 0 24 24" fill="none" stroke-linecap="round" stroke-linejoin="round" stroke="#1fd65c" stroke-width="1.7"><circle cx="12" cy="12" r="9.7"/><path d="M8 12.7 L11.1 15.4 L15.6 9.2"/></svg><div class="av" style="left:1242px;top:17.5px;width:34px;height:34px"><svg width="34" height="34" viewBox="0 0 36 36"><rect width="36" height="36" fill="#1e2026"/><g filter="url(#avb)">
<path d="M19 0.8 Q10.5 1.2 9.4 11 Q8.6 18 5.6 24 Q2.6 30 4.4 38 H33.6 Q35.4 30 32.6 24 Q29.8 18 28.8 11 Q27.6 1.2 19 0.8 Z" fill="#2c201b"/>
<path d="M1.5 30.5 L6 28.4 L7 37 H2 Z M34.5 30 L31 28.2 L30 37 H34 Z" fill="#0f6894"/>
<ellipse cx="19.2" cy="12.6" rx="5.7" ry="8" fill="#cda08c"/>
<path d="M16.2 19 H22.2 L23 27.5 H15.4 Z" fill="#b98a74"/>
<path d="M12.8 37 L15 26.4 H23.8 L26 37 Z" fill="#1482bc"/>
<path d="M15.4 26.4 H23.4 L19.4 35 Z" fill="#c2927c"/>
<path d="M15.4 10.8 h2.6 M20.6 10.8 h2.6" stroke="#5e4238" stroke-width="1.2" fill="none"/>
<path d="M17.6 16.8 h3.2" stroke="#a8766a" stroke-width=".9" fill="none"/>
<path d="M13.2 8.4 Q14.6 3.6 19 3.4 Q23.8 3.6 25.2 8.6 Q22 5.4 19 5.6 Q16 5.4 13.2 8.4 Z" fill="#2c201b"/>
</g></svg></div><div class="t" style="left:1301.6px;top:25.5px;font-size:15.3px;line-height:20px;letter-spacing:0.461px;color:#171a20;-webkit-text-stroke:0.15px #171a20;">1h 00m</div><svg class="abs" style="left:1463px;top:23px" width="22" height="22" viewBox="0 0 22 22" fill="none" stroke-linecap="round" stroke-linejoin="round" stroke="#4c8ce0" stroke-width="1.7"><path d="M10.6 4.5 H4.45 Q2.45 4.5 2.45 6.5 V17.1 Q2.45 19.1 4.45 19.1 H15.2 Q17.2 19.1 17.2 17.1 V11.4"/><path d="M6.2 15.2 L7.6 11.6 L16.5 2.9 Q17.6 2 18.7 3 Q19.7 4.1 18.7 5.2 L9.8 14.2 Z" fill="#4c8ce0" stroke-width="1"/></svg><svg class="abs" style="left:1499px;top:23.5px" width="20" height="22" viewBox="0 0 20 22" fill="none" stroke-linecap="round" stroke-linejoin="round" stroke="#f2415a" stroke-width="1.5"><path d="M7.4 4.6 Q7.4 1.7 10 1.7 Q12.6 1.7 12.6 4.6" opacity=".55" stroke-width="1.3"/><path d="M2.2 5.6 H17.8" stroke-width="1.7"/><path d="M3.8 7 L4.7 16.9 Q5 19.4 7.4 19.4 H12.6 Q15 19.4 15.3 16.9 L16.2 7"/><path d="M8.1 10.2 L8.5 15 M11.9 10.2 L11.5 15" opacity=".55" stroke-width="1.4"/></svg></div><div class="row" style="top:351px"><i class="cb" style="top:24px"></i>
 <div class="t" style="left:69.2px;top:25.5px;font-size:15.3px;line-height:20px;letter-spacing:0.161px;color:#171a20;-webkit-text-stroke:0.15px #171a20;">Jul 31, 2025</div><div class="t" style="left:239.2px;top:25.5px;font-size:15.3px;line-height:20px;letter-spacing:0.030px;color:#171a20;-webkit-text-stroke:0.15px #171a20;">Developed 529 college savings plan investment strategy</div>
 <svg class="abs" style="left:1099px;top:22.3px" width="24" height="24" viewBox="0 0 24 24" fill="none" stroke-linecap="round" stroke-linejoin="round" stroke="#1fd65c" stroke-width="1.7"><circle cx="12" cy="12" r="9.7"/><path d="M8 12.7 L11.1 15.4 L15.6 9.2"/></svg><div class="av" style="left:1242px;top:17.5px;width:34px;height:34px"><svg width="34" height="34" viewBox="0 0 36 36"><rect width="36" height="36" fill="#1e2026"/><g filter="url(#avb)">
<path d="M19 0.8 Q10.5 1.2 9.4 11 Q8.6 18 5.6 24 Q2.6 30 4.4 38 H33.6 Q35.4 30 32.6 24 Q29.8 18 28.8 11 Q27.6 1.2 19 0.8 Z" fill="#2c201b"/>
<path d="M1.5 30.5 L6 28.4 L7 37 H2 Z M34.5 30 L31 28.2 L30 37 H34 Z" fill="#0f6894"/>
<ellipse cx="19.2" cy="12.6" rx="5.7" ry="8" fill="#cda08c"/>
<path d="M16.2 19 H22.2 L23 27.5 H15.4 Z" fill="#b98a74"/>
<path d="M12.8 37 L15 26.4 H23.8 L26 37 Z" fill="#1482bc"/>
<path d="M15.4 26.4 H23.4 L19.4 35 Z" fill="#c2927c"/>
<path d="M15.4 10.8 h2.6 M20.6 10.8 h2.6" stroke="#5e4238" stroke-width="1.2" fill="none"/>
<path d="M17.6 16.8 h3.2" stroke="#a8766a" stroke-width=".9" fill="none"/>
<path d="M13.2 8.4 Q14.6 3.6 19 3.4 Q23.8 3.6 25.2 8.6 Q22 5.4 19 5.6 Q16 5.4 13.2 8.4 Z" fill="#2c201b"/>
</g></svg></div><div class="t" style="left:1301.6px;top:25.5px;font-size:15.3px;line-height:20px;letter-spacing:0.461px;color:#171a20;-webkit-text-stroke:0.15px #171a20;">1h 00m</div><svg class="abs" style="left:1463px;top:23px" width="22" height="22" viewBox="0 0 22 22" fill="none" stroke-linecap="round" stroke-linejoin="round" stroke="#4c8ce0" stroke-width="1.7"><path d="M10.6 4.5 H4.45 Q2.45 4.5 2.45 6.5 V17.1 Q2.45 19.1 4.45 19.1 H15.2 Q17.2 19.1 17.2 17.1 V11.4"/><path d="M6.2 15.2 L7.6 11.6 L16.5 2.9 Q17.6 2 18.7 3 Q19.7 4.1 18.7 5.2 L9.8 14.2 Z" fill="#4c8ce0" stroke-width="1"/></svg><svg class="abs" style="left:1499px;top:23.5px" width="20" height="22" viewBox="0 0 20 22" fill="none" stroke-linecap="round" stroke-linejoin="round" stroke="#f2415a" stroke-width="1.5"><path d="M7.4 4.6 Q7.4 1.7 10 1.7 Q12.6 1.7 12.6 4.6" opacity=".55" stroke-width="1.3"/><path d="M2.2 5.6 H17.8" stroke-width="1.7"/><path d="M3.8 7 L4.7 16.9 Q5 19.4 7.4 19.4 H12.6 Q15 19.4 15.3 16.9 L16.2 7"/><path d="M8.1 10.2 L8.5 15 M11.9 10.2 L11.5 15" opacity=".55" stroke-width="1.4"/></svg></div><div class="row" style="top:421px"><i class="cb" style="top:24px"></i>
 <div class="t" style="left:69.2px;top:25.5px;font-size:15.3px;line-height:20px;letter-spacing:0.113px;color:#171a20;-webkit-text-stroke:0.15px #171a20;">Jul 8, 2025</div><div class="t" style="left:239.2px;top:25.5px;font-size:15.3px;line-height:20px;letter-spacing:0.037px;color:#171a20;-webkit-text-stroke:0.15px #171a20;">Analyzed tax implications of various college funding strategies</div>
 <svg class="abs" style="left:1099px;top:22.3px" width="24" height="24" viewBox="0 0 24 24" fill="none" stroke-linecap="round" stroke-linejoin="round" stroke="#1fd65c" stroke-width="1.7"><circle cx="12" cy="12" r="9.7"/><path d="M8 12.7 L11.1 15.4 L15.6 9.2"/></svg><div class="av" style="left:1242px;top:17.5px;width:34px;height:34px"><svg width="34" height="34" viewBox="0 0 36 36"><rect width="36" height="36" fill="#1e2026"/><g filter="url(#avb)">
<path d="M19 0.8 Q10.5 1.2 9.4 11 Q8.6 18 5.6 24 Q2.6 30 4.4 38 H33.6 Q35.4 30 32.6 24 Q29.8 18 28.8 11 Q27.6 1.2 19 0.8 Z" fill="#2c201b"/>
<path d="M1.5 30.5 L6 28.4 L7 37 H2 Z M34.5 30 L31 28.2 L30 37 H34 Z" fill="#0f6894"/>
<ellipse cx="19.2" cy="12.6" rx="5.7" ry="8" fill="#cda08c"/>
<path d="M16.2 19 H22.2 L23 27.5 H15.4 Z" fill="#b98a74"/>
<path d="M12.8 37 L15 26.4 H23.8 L26 37 Z" fill="#1482bc"/>
<path d="M15.4 26.4 H23.4 L19.4 35 Z" fill="#c2927c"/>
<path d="M15.4 10.8 h2.6 M20.6 10.8 h2.6" stroke="#5e4238" stroke-width="1.2" fill="none"/>
<path d="M17.6 16.8 h3.2" stroke="#a8766a" stroke-width=".9" fill="none"/>
<path d="M13.2 8.4 Q14.6 3.6 19 3.4 Q23.8 3.6 25.2 8.6 Q22 5.4 19 5.6 Q16 5.4 13.2 8.4 Z" fill="#2c201b"/>
</g></svg></div><div class="t" style="left:1301.6px;top:25.5px;font-size:15.3px;line-height:20px;letter-spacing:0.461px;color:#171a20;-webkit-text-stroke:0.15px #171a20;">2h 00m</div><svg class="abs" style="left:1463px;top:23px" width="22" height="22" viewBox="0 0 22 22" fill="none" stroke-linecap="round" stroke-linejoin="round" stroke="#4c8ce0" stroke-width="1.7"><path d="M10.6 4.5 H4.45 Q2.45 4.5 2.45 6.5 V17.1 Q2.45 19.1 4.45 19.1 H15.2 Q17.2 19.1 17.2 17.1 V11.4"/><path d="M6.2 15.2 L7.6 11.6 L16.5 2.9 Q17.6 2 18.7 3 Q19.7 4.1 18.7 5.2 L9.8 14.2 Z" fill="#4c8ce0" stroke-width="1"/></svg><svg class="abs" style="left:1499px;top:23.5px" width="20" height="22" viewBox="0 0 20 22" fill="none" stroke-linecap="round" stroke-linejoin="round" stroke="#f2415a" stroke-width="1.5"><path d="M7.4 4.6 Q7.4 1.7 10 1.7 Q12.6 1.7 12.6 4.6" opacity=".55" stroke-width="1.3"/><path d="M2.2 5.6 H17.8" stroke-width="1.7"/><path d="M3.8 7 L4.7 16.9 Q5 19.4 7.4 19.4 H12.6 Q15 19.4 15.3 16.9 L16.2 7"/><path d="M8.1 10.2 L8.5 15 M11.9 10.2 L11.5 15" opacity=".55" stroke-width="1.4"/></svg></div><div class="row" style="top:491px"><i class="cb" style="top:24px"></i>
 <div class="t" style="left:69.2px;top:25.5px;font-size:15.3px;line-height:20px;letter-spacing:0.113px;color:#171a20;-webkit-text-stroke:0.15px #171a20;">Jul 3, 2025</div><div class="t" style="left:239.2px;top:25.5px;font-size:15.3px;line-height:20px;letter-spacing:-0.056px;color:#171a20;-webkit-text-stroke:0.15px #171a20;">Researched potential colleges based on student's academic profile and career interests</div>
 <svg class="abs" style="left:1099px;top:22.3px" width="24" height="24" viewBox="0 0 24 24" fill="none" stroke-linecap="round" stroke-linejoin="round" stroke="#1fd65c" stroke-width="1.7"><circle cx="12" cy="12" r="9.7"/><path d="M8 12.7 L11.1 15.4 L15.6 9.2"/></svg><div class="av" style="left:1242px;top:17.5px;width:34px;height:34px"><svg width="34" height="34" viewBox="0 0 36 36"><rect width="36" height="36" fill="#1e2026"/><g filter="url(#avb)">
<path d="M19 0.8 Q10.5 1.2 9.4 11 Q8.6 18 5.6 24 Q2.6 30 4.4 38 H33.6 Q35.4 30 32.6 24 Q29.8 18 28.8 11 Q27.6 1.2 19 0.8 Z" fill="#2c201b"/>
<path d="M1.5 30.5 L6 28.4 L7 37 H2 Z M34.5 30 L31 28.2 L30 37 H34 Z" fill="#0f6894"/>
<ellipse cx="19.2" cy="12.6" rx="5.7" ry="8" fill="#cda08c"/>
<path d="M16.2 19 H22.2 L23 27.5 H15.4 Z" fill="#b98a74"/>
<path d="M12.8 37 L15 26.4 H23.8 L26 37 Z" fill="#1482bc"/>
<path d="M15.4 26.4 H23.4 L19.4 35 Z" fill="#c2927c"/>
<path d="M15.4 10.8 h2.6 M20.6 10.8 h2.6" stroke="#5e4238" stroke-width="1.2" fill="none"/>
<path d="M17.6 16.8 h3.2" stroke="#a8766a" stroke-width=".9" fill="none"/>
<path d="M13.2 8.4 Q14.6 3.6 19 3.4 Q23.8 3.6 25.2 8.6 Q22 5.4 19 5.6 Q16 5.4 13.2 8.4 Z" fill="#2c201b"/>
</g></svg></div><div class="t" style="left:1301.6px;top:25.5px;font-size:15.3px;line-height:20px;letter-spacing:0.461px;color:#171a20;-webkit-text-stroke:0.15px #171a20;">0h 15m</div><svg class="abs" style="left:1463px;top:23px" width="22" height="22" viewBox="0 0 22 22" fill="none" stroke-linecap="round" stroke-linejoin="round" stroke="#4c8ce0" stroke-width="1.7"><path d="M10.6 4.5 H4.45 Q2.45 4.5 2.45 6.5 V17.1 Q2.45 19.1 4.45 19.1 H15.2 Q17.2 19.1 17.2 17.1 V11.4"/><path d="M6.2 15.2 L7.6 11.6 L16.5 2.9 Q17.6 2 18.7 3 Q19.7 4.1 18.7 5.2 L9.8 14.2 Z" fill="#4c8ce0" stroke-width="1"/></svg><svg class="abs" style="left:1499px;top:23.5px" width="20" height="22" viewBox="0 0 20 22" fill="none" stroke-linecap="round" stroke-linejoin="round" stroke="#f2415a" stroke-width="1.5"><path d="M7.4 4.6 Q7.4 1.7 10 1.7 Q12.6 1.7 12.6 4.6" opacity=".55" stroke-width="1.3"/><path d="M2.2 5.6 H17.8" stroke-width="1.7"/><path d="M3.8 7 L4.7 16.9 Q5 19.4 7.4 19.4 H12.6 Q15 19.4 15.3 16.9 L16.2 7"/><path d="M8.1 10.2 L8.5 15 M11.9 10.2 L11.5 15" opacity=".55" stroke-width="1.4"/></svg></div><div class="row" style="top:561px"><i class="cb" style="top:24px"></i>
 <div class="t" style="left:69.2px;top:25.5px;font-size:15.3px;line-height:20px;letter-spacing:0.152px;color:#171a20;-webkit-text-stroke:0.15px #171a20;">Jun 16, 2025</div><div class="t" style="left:239.2px;top:25.5px;font-size:15.3px;line-height:20px;letter-spacing:0.019px;color:#171a20;-webkit-text-stroke:0.15px #171a20;">Discussed impact of family income changes on financial aid eligibility</div>
 <svg class="abs" style="left:1099px;top:22.3px" width="24" height="24" viewBox="0 0 24 24" fill="none" stroke-linecap="round" stroke-linejoin="round" stroke="#1fd65c" stroke-width="1.7"><circle cx="12" cy="12" r="9.7"/><path d="M8 12.7 L11.1 15.4 L15.6 9.2"/></svg><div class="av" style="left:1242px;top:17.5px;width:34px;height:34px"><svg width="34" height="34" viewBox="0 0 36 36"><rect width="36" height="36" fill="#1e2026"/><g filter="url(#avb)">
<path d="M19 0.8 Q10.5 1.2 9.4 11 Q8.6 18 5.6 24 Q2.6 30 4.4 38 H33.6 Q35.4 30 32.6 24 Q29.8 18 28.8 11 Q27.6 1.2 19 0.8 Z" fill="#2c201b"/>
<path d="M1.5 30.5 L6 28.4 L7 37 H2 Z M34.5 30 L31 28.2 L30 37 H34 Z" fill="#0f6894"/>
<ellipse cx="19.2" cy="12.6" rx="5.7" ry="8" fill="#cda08c"/>
<path d="M16.2 19 H22.2 L23 27.5 H15.4 Z" fill="#b98a74"/>
<path d="M12.8 37 L15 26.4 H23.8 L26 37 Z" fill="#1482bc"/>
<path d="M15.4 26.4 H23.4 L19.4 35 Z" fill="#c2927c"/>
<path d="M15.4 10.8 h2.6 M20.6 10.8 h2.6" stroke="#5e4238" stroke-width="1.2" fill="none"/>
<path d="M17.6 16.8 h3.2" stroke="#a8766a" stroke-width=".9" fill="none"/>
<path d="M13.2 8.4 Q14.6 3.6 19 3.4 Q23.8 3.6 25.2 8.6 Q22 5.4 19 5.6 Q16 5.4 13.2 8.4 Z" fill="#2c201b"/>
</g></svg></div><div class="t" style="left:1301.6px;top:25.5px;font-size:15.3px;line-height:20px;letter-spacing:0.461px;color:#171a20;-webkit-text-stroke:0.15px #171a20;">1h 00m</div><svg class="abs" style="left:1463px;top:23px" width="22" height="22" viewBox="0 0 22 22" fill="none" stroke-linecap="round" stroke-linejoin="round" stroke="#4c8ce0" stroke-width="1.7"><path d="M10.6 4.5 H4.45 Q2.45 4.5 2.45 6.5 V17.1 Q2.45 19.1 4.45 19.1 H15.2 Q17.2 19.1 17.2 17.1 V11.4"/><path d="M6.2 15.2 L7.6 11.6 L16.5 2.9 Q17.6 2 18.7 3 Q19.7 4.1 18.7 5.2 L9.8 14.2 Z" fill="#4c8ce0" stroke-width="1"/></svg><svg class="abs" style="left:1499px;top:23.5px" width="20" height="22" viewBox="0 0 20 22" fill="none" stroke-linecap="round" stroke-linejoin="round" stroke="#f2415a" stroke-width="1.5"><path d="M7.4 4.6 Q7.4 1.7 10 1.7 Q12.6 1.7 12.6 4.6" opacity=".55" stroke-width="1.3"/><path d="M2.2 5.6 H17.8" stroke-width="1.7"/><path d="M3.8 7 L4.7 16.9 Q5 19.4 7.4 19.4 H12.6 Q15 19.4 15.3 16.9 L16.2 7"/><path d="M8.1 10.2 L8.5 15 M11.9 10.2 L11.5 15" opacity=".55" stroke-width="1.4"/></svg></div><div class="row" style="top:631px"><i class="cb" style="top:24px"></i>
 <div class="t" style="left:69.2px;top:25.5px;font-size:15.3px;line-height:20px;letter-spacing:0.139px;color:#171a20;-webkit-text-stroke:0.15px #171a20;">Jun 2, 2025</div><div class="t" style="left:239.2px;top:25.5px;font-size:15.3px;line-height:20px;letter-spacing:-0.200px;color:#171a20;-webkit-text-stroke:0.15px #171a20;">Prepared overview of scholarship opportunities for upcoming year</div>
 <svg class="abs" style="left:1099px;top:22.3px" width="24" height="24" viewBox="0 0 24 24" fill="none" stroke-linecap="round" stroke-linejoin="round" stroke="#1fd65c" stroke-width="1.7"><circle cx="12" cy="12" r="9.7"/><path d="M8 12.7 L11.1 15.4 L15.6 9.2"/></svg><div class="av" style="left:1242px;top:17.5px;width:34px;height:34px"><svg width="34" height="34" viewBox="0 0 36 36"><rect width="36" height="36" fill="#1e2026"/><g filter="url(#avb)">
<path d="M19 0.8 Q10.5 1.2 9.4 11 Q8.6 18 5.6 24 Q2.6 30 4.4 38 H33.6 Q35.4 30 32.6 24 Q29.8 18 28.8 11 Q27.6 1.2 19 0.8 Z" fill="#2c201b"/>
<path d="M1.5 30.5 L6 28.4 L7 37 H2 Z M34.5 30 L31 28.2 L30 37 H34 Z" fill="#0f6894"/>
<ellipse cx="19.2" cy="12.6" rx="5.7" ry="8" fill="#cda08c"/>
<path d="M16.2 19 H22.2 L23 27.5 H15.4 Z" fill="#b98a74"/>
<path d="M12.8 37 L15 26.4 H23.8 L26 37 Z" fill="#1482bc"/>
<path d="M15.4 26.4 H23.4 L19.4 35 Z" fill="#c2927c"/>
<path d="M15.4 10.8 h2.6 M20.6 10.8 h2.6" stroke="#5e4238" stroke-width="1.2" fill="none"/>
<path d="M17.6 16.8 h3.2" stroke="#a8766a" stroke-width=".9" fill="none"/>
<path d="M13.2 8.4 Q14.6 3.6 19 3.4 Q23.8 3.6 25.2 8.6 Q22 5.4 19 5.6 Q16 5.4 13.2 8.4 Z" fill="#2c201b"/>
</g></svg></div><div class="t" style="left:1301.6px;top:25.5px;font-size:15.3px;line-height:20px;letter-spacing:0.461px;color:#171a20;-webkit-text-stroke:0.15px #171a20;">1h 30m</div><svg class="abs" style="left:1463px;top:23px" width="22" height="22" viewBox="0 0 22 22" fill="none" stroke-linecap="round" stroke-linejoin="round" stroke="#4c8ce0" stroke-width="1.7"><path d="M10.6 4.5 H4.45 Q2.45 4.5 2.45 6.5 V17.1 Q2.45 19.1 4.45 19.1 H15.2 Q17.2 19.1 17.2 17.1 V11.4"/><path d="M6.2 15.2 L7.6 11.6 L16.5 2.9 Q17.6 2 18.7 3 Q19.7 4.1 18.7 5.2 L9.8 14.2 Z" fill="#4c8ce0" stroke-width="1"/></svg><svg class="abs" style="left:1499px;top:23.5px" width="20" height="22" viewBox="0 0 20 22" fill="none" stroke-linecap="round" stroke-linejoin="round" stroke="#f2415a" stroke-width="1.5"><path d="M7.4 4.6 Q7.4 1.7 10 1.7 Q12.6 1.7 12.6 4.6" opacity=".55" stroke-width="1.3"/><path d="M2.2 5.6 H17.8" stroke-width="1.7"/><path d="M3.8 7 L4.7 16.9 Q5 19.4 7.4 19.4 H12.6 Q15 19.4 15.3 16.9 L16.2 7"/><path d="M8.1 10.2 L8.5 15 M11.9 10.2 L11.5 15" opacity=".55" stroke-width="1.4"/></svg></div>
</div></div>
</div>
<div id="dim" class="abs"></div>
<div class="abs" style="left:1807px;top:575px;width:53px;height:66px;background:#fcb024"></div>
<div class="abs" style="left:1817px;top:586px;width:32px;height:45px;background:#fbfbfc"></div>
<svg class="abs" style="left:1820px;top:597.2px" width="20" height="22" viewBox="0 0 20 22" fill="none" stroke-linecap="round" stroke-linejoin="round" stroke="#f2415a" stroke-width="1.35"><path d="M7.4 4.6 Q7.4 1.7 10 1.7 Q12.6 1.7 12.6 4.6" opacity=".55" stroke-width="1.1500000000000001"/><path d="M2.2 5.6 H17.8" stroke-width="1.55"/><path d="M3.8 7 L4.7 16.9 Q5 19.4 7.4 19.4 H12.6 Q15 19.4 15.3 16.9 L16.2 7"/><path d="M8.1 10.2 L8.5 15 M11.9 10.2 L11.5 15" opacity=".55" stroke-width="1.25"/></svg>
<svg class="abs" style="left:0;top:0" width="1903" height="1003" viewBox="0 0 1903 1003" fill="none" stroke="#fcb024" stroke-width="12.5" stroke-linecap="round" stroke-linejoin="round"><path d="M1582.5 508 C1600 570 1660 596 1742 590"/><path d="M1711 557.5 L1744 590 L1711 620.5"/></svg>
<div id="pscroll" class="abs"><i></i></div>
</body>
</html>
